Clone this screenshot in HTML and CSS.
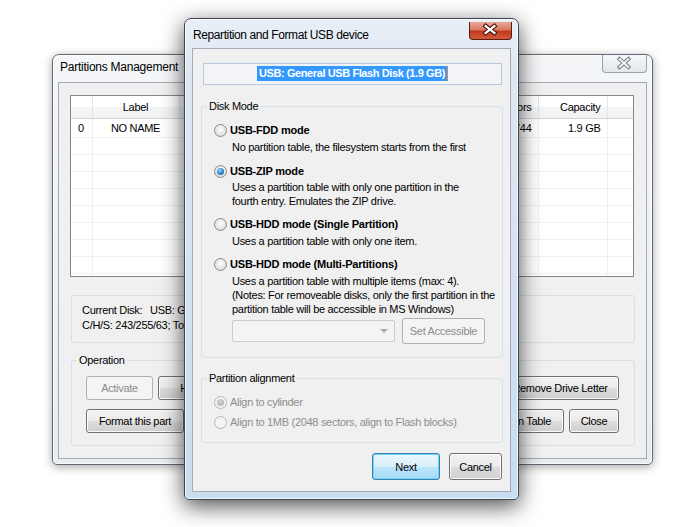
FILE: index.html
```html
<!DOCTYPE html>
<html lang="en">
<head>
  <meta charset="UTF-8">
  <title>Repartition and Format USB device</title>
  <link rel="stylesheet" href="styles.css">
</head>
<body>
<div class="desktop">

  <!-- background window -->
  <div class="window window-back">
    <div class="titlebar">
      <span class="title">Partitions Management</span>
      <span class="close-btn close-inactive">
        <svg width="45" height="18" viewBox="0 0 45 18">
          <path d="M18 5 L27 13 M27 5 L18 13" stroke="#6f7882" stroke-width="4" stroke-linecap="square"/>
          <path d="M18 5 L27 13 M27 5 L18 13" stroke="#f4f5f6" stroke-width="2" stroke-linecap="square"/>
        </svg>
      </span>
    </div>
    <div class="client">
      <div class="listview">
        <table>
          <colgroup>
            <col style="width:21px"><col style="width:87px"><col style="width:289px">
            <col style="width:70px"><col style="width:69px"><col style="width:26px">
          </colgroup>
          <thead>
            <tr>
              <th></th><th class="center">Label</th><th></th>
              <th class="right">Sectors</th><th class="right">Capacity</th><th></th>
            </tr>
          </thead>
          <tbody>
            <tr>
              <td>0</td><td class="center">NO NAME</td><td></td>
              <td class="right">3903744</td><td class="right">1.9 GB</td><td></td>
            </tr>
            <tr><td></td><td></td><td></td><td></td><td></td><td></td></tr>
            <tr><td></td><td></td><td></td><td></td><td></td><td></td></tr>
            <tr><td></td><td></td><td></td><td></td><td></td><td></td></tr>
            <tr><td></td><td></td><td></td><td></td><td></td><td></td></tr>
            <tr><td></td><td></td><td></td><td></td><td></td><td></td></tr>
            <tr><td></td><td></td><td></td><td></td><td></td><td></td></tr>
            <tr><td></td><td></td><td></td><td></td><td></td><td></td></tr>
            <tr><td></td><td></td><td></td><td></td><td></td><td></td></tr>
            <tr><td></td><td></td><td></td><td></td><td></td><td></td></tr>
          </tbody>
        </table>
      </div>

      <div class="groupbox disk-info">
        <div><span class="info-label">Current Disk:</span>USB: General USB Flash Disk (1.9 GB)</div>
        <div>C/H/S: 243/255/63; Total Sectors: 3903744</div>
      </div>

      <fieldset class="groupbox operation">
        <legend>Operation</legend>
        <div class="btn-row">
          <div class="btn-set">
            <button class="btn btn-activate" disabled>Activate</button>
            <button class="btn btn-hide">Hide</button>
          </div>
          <button class="btn btn-letter">Remove Drive Letter</button>
        </div>
        <div class="btn-row">
          <button class="btn btn-format">Format this part</button>
          <div class="btn-set">
            <button class="btn btn-restore">Restore Partition Table</button>
            <button class="btn btn-close">Close</button>
          </div>
        </div>
      </fieldset>
    </div>
  </div>

  <!-- foreground dialog -->
  <div class="window window-front">
    <div class="titlebar">
      <span class="title">Repartition and Format USB device</span>
      <span class="close-btn close-active">
        <svg width="43" height="18" viewBox="0 0 43 18">
          <path d="M17 5 L26 12 M26 5 L17 12" stroke="#4a1409" stroke-width="4.5" stroke-linecap="square"/>
          <path d="M17 5 L26 12 M26 5 L17 12" stroke="#ffffff" stroke-width="2.3" stroke-linecap="square"/>
        </svg>
      </span>
    </div>
    <div class="client">
      <div class="device-box"><span class="selected">USB: General USB Flash Disk (1.9 GB)</span></div>

      <fieldset class="groupbox disk-mode">
        <legend>Disk Mode</legend>

        <div class="option">
          <div class="radio-row"><span class="radio"></span><span class="mode">USB-FDD mode</span></div>
          <p class="desc">No partition table, the filesystem starts from the first</p>
        </div>

        <div class="option option-zip">
          <div class="radio-row"><span class="radio checked"></span><span class="mode">USB-ZIP mode</span></div>
          <p class="desc">Uses a partition table with only one partition in the<br>fourth entry. Emulates the ZIP drive.</p>
        </div>

        <div class="option">
          <div class="radio-row"><span class="radio"></span><span class="mode">USB-HDD mode (Single Partition)</span></div>
          <p class="desc">Uses a partition table with only one item.</p>
        </div>

        <div class="option">
          <div class="radio-row"><span class="radio"></span><span class="mode">USB-HDD mode (Multi-Partitions)</span></div>
          <p class="desc">Uses a partition table with multiple items (max: 4).<br>(Notes: For removeable disks, only the first partition in the<br>partition table will be accessible in MS Windows)</p>
          <div class="access-row">
            <span class="combo"><span class="combo-arrow"></span></span>
            <button class="btn btn-access" disabled>Set Accessible</button>
          </div>
        </div>
      </fieldset>

      <fieldset class="groupbox alignment">
        <legend>Partition alignment</legend>
        <div class="radio-row disabled"><span class="radio checked"></span><span>Align to cylinder</span></div>
        <div class="radio-row disabled"><span class="radio"></span><span>Align to 1MB (2048 sectors, align to Flash blocks)</span></div>
      </fieldset>

      <div class="dialog-buttons">
        <button class="btn btn-default">Next</button>
        <button class="btn btn-cancel">Cancel</button>
      </div>
    </div>
  </div>

</div>
</body>
</html>
```

FILE: styles.css
```css
* {
  box-sizing: border-box;
}
body {
  margin: 0;
  background: #fff;
  font-family: "Liberation Sans", Arial, sans-serif;
  font-size: 11px;
  letter-spacing: -0.3px;
  color: #000;
}
.desktop {
  position: relative;
  width: 680px;
  height: 527px;
  overflow: hidden;
}

/* window frames */
.window {
  position: absolute;
  display: flex;
  flex-direction: column;
  border: 1px solid #5f6a76;
  border-radius: 7px 7px 5px 5px;
}
.window-back {
  left: 52px;
  top: 54px;
  width: 601px;
  height: 411px;
  padding: 0 5px 5px;
  background: linear-gradient(#f4f6f8, #e8ecf0);
  box-shadow: 0 2px 10px rgba(0, 0, 0, 0.35), inset 0 0 0 1px rgba(255, 255, 255, 0.8);
}
.window-front {
  left: 184px;
  top: 18px;
  width: 335px;
  height: 482px;
  padding: 0 7px 7px;
  border-color: #3e4650;
  background: linear-gradient(#e9eff6 0, #dce7f3 60px, #c9dcf0 100%);
  box-shadow: 0 6px 22px rgba(0, 0, 0, 0.7), inset 0 0 0 1px rgba(255, 255, 255, 0.75);
}
.titlebar {
  display: flex;
  align-items: center;
  flex-shrink: 0;
}
.window-back .titlebar {
  height: 27px;
  padding: 0 0 3px 2px;
}
.window-front .titlebar {
  height: 29px;
  padding: 3px 0 0 1px;
}
.title {
  font-size: 12px;
  letter-spacing: -0.4px;
  color: #000;
}
.window-back .title {
  letter-spacing: -0.25px;
}
.close-btn {
  margin-left: auto;
  align-self: flex-start;
  display: flex;
}
.close-inactive {
  width: 45px;
  height: 18px;
  border: 1px solid #9aa2ab;
  border-top: none;
  border-radius: 0 0 4px 4px;
  background: linear-gradient(#f6f7f8, #e2e6ea);
  overflow: hidden;
}
.close-active {
  width: 43px;
  height: 18px;
  margin-right: -1px;
  border: 1px solid #5a1d12;
  border-top: none;
  border-radius: 0 0 4px 4px;
  background: linear-gradient(#e9a99a 0, #d77a63 45%, #c2391d 55%, #d15a3c 100%);
  overflow: hidden;
}
.close-inactive svg,
.close-active svg {
  margin: -1px 0 0 -1px;
}

.client {
  flex: 1;
  background: #f0f0f0;
  border: 1px solid #a3acb6;
  display: flex;
  flex-direction: column;
}
.window-back .client {
  padding: 12px 12px 0 11px;
}
.window-front .client {
  padding: 14px 7px 0 8px;
}

/* list view */
.listview {
  height: 182px;
  border: 1px solid #828790;
  background: #fff;
  overflow: hidden;
}
.listview table {
  border-collapse: collapse;
  table-layout: fixed;
  width: 562px;
}
.listview th {
  height: 22px;
  font-weight: normal;
  text-align: left;
  padding: 0 5px;
  white-space: nowrap;
  overflow: hidden;
  background: linear-gradient(#ffffff 0, #ffffff 50%, #f4f5f7 51%, #f1f2f4 100%);
  border-right: 1px solid #e3e5e8;
  border-bottom: 1px solid #d5d5d5;
}
.listview td {
  height: 17px;
  padding: 0 5px 0 7px;
  white-space: nowrap;
  overflow: hidden;
  border-right: 1px solid #f0f0f0;
  border-bottom: 1px solid #f0f0f0;
}
.listview tbody tr:first-child td {
  height: 19px;
}
.listview .center {
  text-align: center;
  padding: 0;
}
.listview .right {
  text-align: right;
  padding-right: 6px;
}

/* group boxes */
.groupbox {
  margin: 0;
  border: 1px solid #d5dfe5;
  border-radius: 3px;
  min-width: 0;
}
.groupbox legend {
  padding: 0 2px;
  line-height: 14px;
}
.disk-info {
  margin: 18px -1px 0 1px;
  height: 48px;
  padding: 7px 10px 0;
  line-height: 15px;
  white-space: nowrap;
}
.info-label {
  display: inline-block;
  width: 68px;
}
.operation {
  margin: 10px -1px 0 1px;
  padding: 9px 15px 12px 14px;
}
.operation legend {
  margin-left: -9px;
}
.btn-row {
  display: flex;
  justify-content: space-between;
}
.btn-row + .btn-row {
  margin-top: 9px;
}
.btn-set {
  display: flex;
  gap: 5px;
}

/* buttons */
.btn {
  font-family: inherit;
  font-size: 11px;
  letter-spacing: -0.3px;
  color: #000;
  height: 24px;
  padding: 0;
  border: 1px solid #707070;
  border-radius: 3px;
  background: linear-gradient(#f2f2f2 0, #ebebeb 50%, #dddddd 51%, #cfcfcf 100%);
  box-shadow: inset 0 0 0 1px #fbfbfb;
}
.btn:disabled {
  color: #8d8d8d;
  border-color: #adb2b5;
  background: #f4f4f4;
  box-shadow: none;
}
.btn-activate { width: 67px; }
.btn-hide { width: 66px; }
.btn-letter { width: 118px; }
.btn-format { width: 98px; }
.btn-restore { width: 130px; }
.btn-close { width: 50px; }

/* dialog content */
.device-box {
  height: 22px;
  margin: 0 1px 0 2px;
  border: 1px solid #b9c8da;
  background: #f2f4f7;
  display: flex;
  align-items: center;
  justify-content: center;
}
.selected {
  background: #3399ff;
  color: #fff;
  font-weight: bold;
  letter-spacing: -0.4px;
  line-height: 15px;
  padding: 0 2px;
  margin-top: -2px;
  border-right: 1px solid #e08a3c;
}
.disk-mode {
  margin-top: 14px;
  padding: 9px 8px 13px 12px;
}
.disk-mode legend,
.alignment legend {
  margin-left: -7px;
}
.option + .option {
  margin-top: 8px;
}
.option-zip {
  padding-top: 1px;
}
.radio-row {
  display: flex;
  align-items: center;
  gap: 3px;
  height: 16px;
  white-space: nowrap;
}
.mode {
  font-weight: bold;
  letter-spacing: -0.2px;
}
.radio {
  width: 13px;
  height: 13px;
  border-radius: 50%;
  border: 1px solid #8a8b8c;
  background: radial-gradient(circle at 50% 40%, #fdfdfd 0, #e3e3e3 60%, #cfd0d1 100%);
  display: inline-flex;
  align-items: center;
  justify-content: center;
  flex-shrink: 0;
}
.radio.checked::after {
  content: "";
  width: 7px;
  height: 7px;
  border-radius: 50%;
  background: radial-gradient(circle at 40% 35%, #9bd8f8 0, #3a8fd2 45%, #14508f 100%);
}
.desc {
  margin: 2px 0 0 18px;
  line-height: 14px;
  white-space: nowrap;
}
.option-zip .desc {
  margin-top: 1px;
}
.access-row {
  display: flex;
  align-items: center;
  gap: 7px;
  margin: 2px 0 0 18px;
}
.combo {
  width: 163px;
  height: 22px;
  border: 1px solid #c9cdd1;
  border-radius: 2px;
  background: #f4f4f4;
  display: flex;
  align-items: center;
  justify-content: flex-end;
  padding-right: 6px;
}
.combo-arrow {
  width: 0;
  height: 0;
  border-left: 4px solid transparent;
  border-right: 4px solid transparent;
  border-top: 4px solid #a8a8a8;
}
.btn-access {
  width: 83px;
  height: 26px;
}
.alignment {
  margin-top: 13px;
  padding: 9px 8px 12px 12px;
}
.alignment .radio-row + .radio-row {
  margin-top: 4px;
}
.radio-row.disabled {
  color: #8d8d8d;
}
.radio-row.disabled .radio {
  border-color: #b5b5b5;
  background: #f4f4f4;
}
.radio-row.disabled .radio.checked::after {
  background: radial-gradient(circle at 45% 40%, #d4d4d4 0, #a9a9a9 100%);
}
.dialog-buttons {
  display: flex;
  justify-content: flex-end;
  gap: 9px;
  margin: 10px 1px 0 0;
}
.dialog-buttons .btn {
  height: 27px;
}
.btn-default {
  width: 68px;
  border-color: #3c7fb1;
  background: linear-gradient(#eaf6fd 0, #d9f0fc 50%, #bee6fd 51%, #a7d9f5 100%);
  box-shadow: inset 0 0 0 1px #6fd5f7;
}
.btn-cancel {
  width: 53px;
}
```
